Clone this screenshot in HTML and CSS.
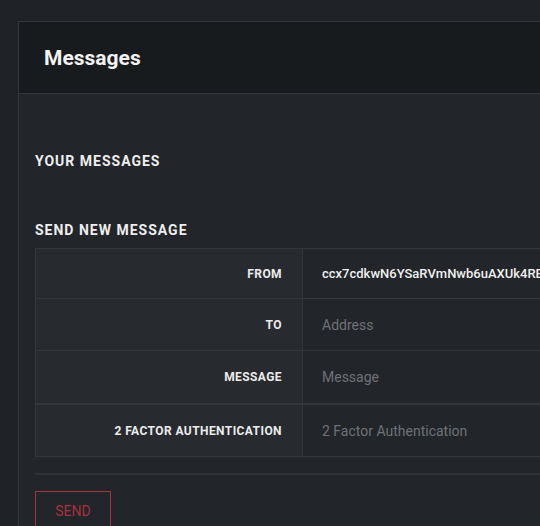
FILE: index.html
```html
<!DOCTYPE html>
<html>
<head>
<meta charset="utf-8">
<link rel="stylesheet" href="styles.css">
</head>
<body>
<div class="panel">
  <div class="panel-header"><h1>Messages</h1></div>
  <div class="panel-body">
    <h2 class="section-title first">Your messages</h2>
    <h2 class="section-title second">Send new message</h2>
    <div class="form-table">
      <div class="row r1"><div class="label">From</div><div class="value">ccx7cdkwN6YSaRVmNwb6uAXUk4REwq8UPgjLcj3uD2nEZ8Txb3wm5pJ9yR</div></div>
      <div class="row r2"><div class="label">To</div><div class="value placeholder">Address</div></div>
      <div class="row r3"><div class="label">Message</div><div class="value placeholder">Message</div></div>
      <div class="row r4"><div class="label">2 Factor Authentication</div><div class="value placeholder">2 Factor Authentication</div></div>
    </div>
    <div class="divider"></div>
    <button class="send">SEND</button>
  </div>
</div>
</body>
</html>
```
FILE: styles.css
```css
html, body {
  margin: 0;
  padding: 0;
  background: #1f2226;
  overflow: hidden;
  height: 526px;
  font-family: Roboto, "Liberation Sans", sans-serif;
}
.panel {
  margin: 21px 0 0 18px;
  width: 800px;
  border: 1px solid #33363b;
  background: #222529;
  min-height: 600px;
}
.panel-header {
  height: 71px;
  background: #181b1e;
  border-bottom: 1px solid #33363b;
  display: flex;
  align-items: center;
  padding-left: 25px;
}
.panel-header h1 {
  margin: 0;
  font-size: 21px;
  font-weight: 700;
  color: #f2f2f2;
  letter-spacing: 0;
}
.panel-body {
  padding: 0 16px;
}
.section-title {
  margin: 0;
  font-size: 14px;
  font-weight: 700;
  text-transform: uppercase;
  letter-spacing: 1px;
  color: #eeeeee;
  line-height: 16px;
}
.section-title.first { padding-top: 59px; }
.section-title.second { margin-top: 53px; }
.form-table {
  margin-top: 10px;
  border: 1px solid #33363b;
  border-bottom: 1px solid #33363b;
}
.row {
  display: grid;
  grid-template-columns: 267px 1fr;
  border-bottom: 1px solid #33363b;
}
.row:last-child { border-bottom: none; }
.r1 { height: 49px; }
.r2 { height: 51px; }
.r3 { height: 52px; border-bottom-width: 2px; }
.r4 { height: 51px; }
.label {
  background: #272a2f;
  border-right: 1px solid #33363b;
  display: flex;
  align-items: center;
  justify-content: flex-end;
  padding-right: 20px;
  font-size: 12px;
  font-weight: 700;
  letter-spacing: 0.42px;
  text-transform: uppercase;
  color: #ececec;
}
.value {
  display: flex;
  align-items: center;
  padding-left: 19px;
  font-size: 14px;
  color: #f0f0f0;
  white-space: nowrap;
  overflow: hidden;
}
.r1 .value { font-size: 13px; font-weight: 500; }
.value.placeholder { color: #6e7277; }
.divider {
  margin-top: 16px;
  height: 2px;
  background: #2f3237;
}
.send {
  margin-top: 16px;
  width: 76px;
  height: 40px;
  background: transparent;
  border: 1px solid #a8313f;
  color: #a8313f;
  font-family: Roboto, "Liberation Sans", sans-serif;
  font-size: 14px;
  padding: 0;
}
```
